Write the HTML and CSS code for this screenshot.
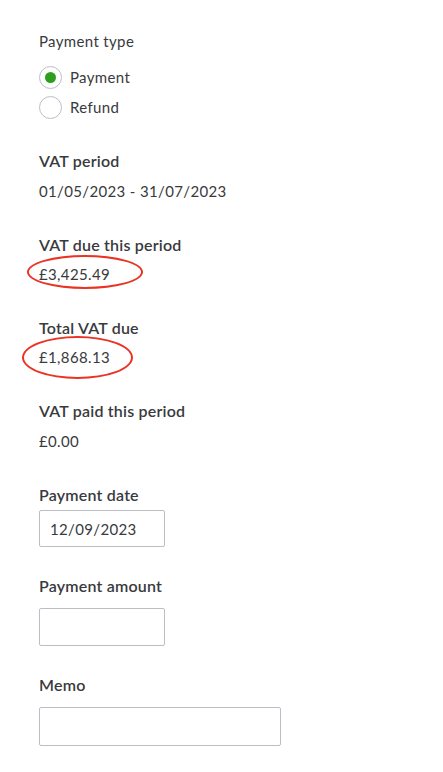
FILE: index.html
```html
<!DOCTYPE html>
<html lang="en">
<head>
<meta charset="utf-8">
<title>Pay VAT</title>
<link rel="stylesheet" href="styles.css">
</head>
<body>
<form class="form">
  <div class="group">
    <div class="group-title">Payment type</div>
    <div class="radios">
      <label class="radio"><span class="dot checked"></span><span>Payment</span></label>
      <label class="radio"><span class="dot"></span><span>Refund</span></label>
    </div>
  </div>

  <div class="field">
    <div class="label">VAT period</div>
    <div class="value">01/05/2023 - 31/07/2023</div>
  </div>

  <div class="field">
    <div class="label">VAT due this period</div>
    <div class="value highlight">£3,425.49<span class="ring ring-a"></span></div>
  </div>

  <div class="field">
    <div class="label">Total VAT due</div>
    <div class="value highlight">£1,868.13<span class="ring ring-b"></span></div>
  </div>

  <div class="field">
    <div class="label">VAT paid this period</div>
    <div class="value">£0.00</div>
  </div>

  <div class="field input-field">
    <div class="label">Payment date</div>
    <div class="box box-date">12/09/2023</div>
  </div>

  <div class="field input-field">
    <div class="label">Payment amount</div>
    <div class="box box-amount"></div>
  </div>

  <div class="field input-field">
    <div class="label">Memo</div>
    <div class="box box-memo"></div>
  </div>
</form>
</body>
</html>
```

FILE: styles.css
```css
html, body {
  margin: 0;
  padding: 0;
  background: #ffffff;
}

body {
  font-family: Lato, "Open Sans", sans-serif;
  font-size: 15px;
  line-height: 20px;
  letter-spacing: 0.35px;
  color: #393a3d;
}

.form {
  display: flex;
  flex-direction: column;
  padding: 31px 0 0 39px;
}

.group-title {
  height: 20px;
}

.radios {
  display: flex;
  flex-direction: column;
  margin-top: 11px;
}

.radio {
  display: flex;
  align-items: center;
  gap: 8px;
  height: 30px;
}

.dot {
  box-sizing: border-box;
  width: 23px;
  height: 23px;
  border: 1px solid #babec5;
  border-radius: 50%;
  display: flex;
  align-items: center;
  justify-content: center;
}

.dot.checked::after {
  content: "";
  width: 11px;
  height: 11px;
  border-radius: 50%;
  background: #2ca01c;
}

.group {
  margin-bottom: 29px;
}

.field {
  display: flex;
  flex-direction: column;
  margin-bottom: 34px;
}

.field.input-field {
  margin-bottom: 29px;
}

.label {
  font-family: "Lato Semibold", Lato, "Open Sans", sans-serif;
  font-weight: 600;
  font-size: 16px;
  letter-spacing: 0.2px;
  height: 20px;
}

.value {
  margin-top: 10px;
  height: 20px;
  color: #393a3d;
}

.highlight {
  position: relative;
  margin-top: 9px;
}

.ring {
  position: absolute;
  box-sizing: border-box;
  border: 2px solid #ea3323;
  border-radius: 50%;
}

.ring-a {
  left: -12px;
  top: -9px;
  width: 116px;
  height: 34px;
}

.ring-b {
  left: -17px;
  top: -11px;
  width: 111px;
  height: 43px;
}

.box {
  box-sizing: border-box;
  border: 1px solid #babec5;
  border-radius: 2px;
  padding: 0 10px;
  display: flex;
  align-items: center;
}

.box-date {
  margin-top: 5px;
  width: 126px;
  height: 37px;
}

.box-amount {
  margin-top: 12px;
  width: 126px;
  height: 38px;
}

.box-memo {
  margin-top: 12px;
  width: 242px;
  height: 39px;
}
```
